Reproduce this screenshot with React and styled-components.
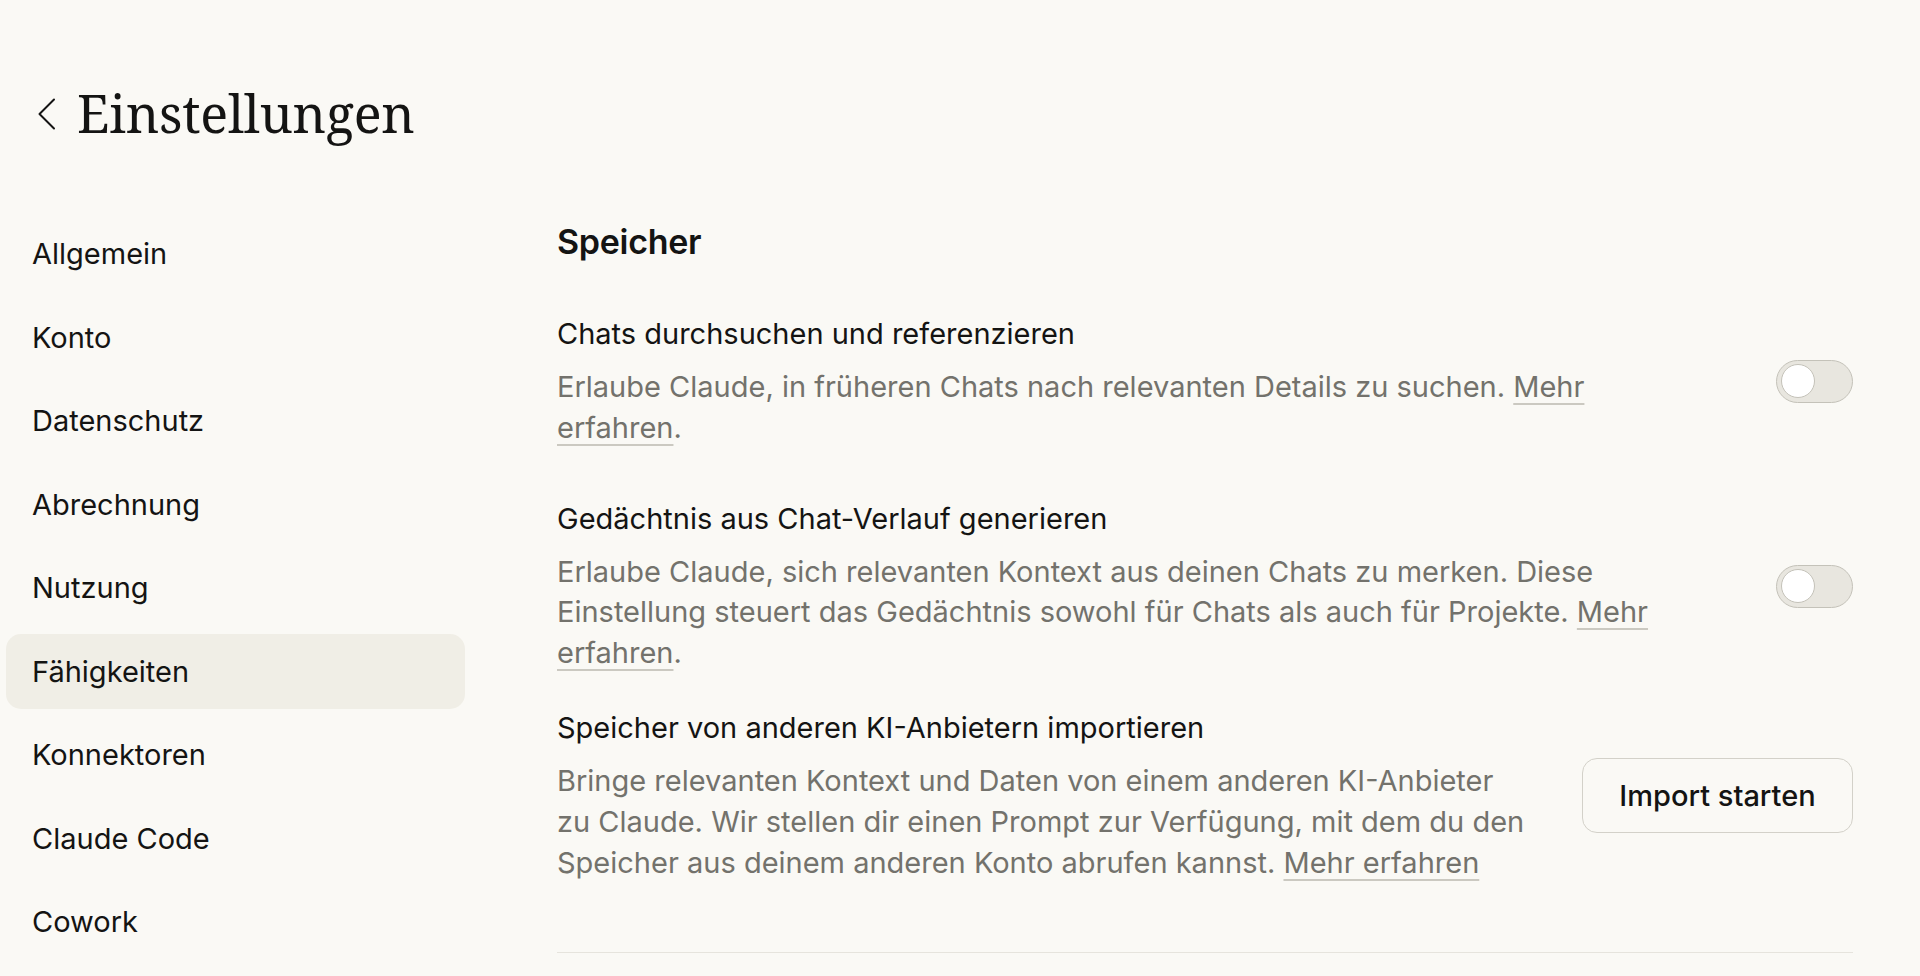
import React from 'react';
import styled, { createGlobalStyle } from 'styled-components';

const colors = {
  bg: '#faf9f5',
  text: '#141413',
  muted: '#73726c',
  active: '#f0eee6',
  border: '#c4c2b9',
  line: '#e6e4dd',
};

const GlobalStyle = createGlobalStyle`
  body {
    margin: 0;
    background: ${colors.bg};
    color: ${colors.text};
    font-family: Inter, "Noto Sans", sans-serif;
  }
`;

const navItems = [
  'Allgemein',
  'Konto',
  'Datenschutz',
  'Abrechnung',
  'Nutzung',
  'Fähigkeiten',
  'Konnektoren',
  'Claude Code',
  'Cowork',
];

function App() {
  return (
    <Page>
      <GlobalStyle />
      <Header>
        <BackButton aria-label="Zurück">
          <svg width="20" height="32" viewBox="0 0 20 32" fill="none">
            <path d="M17 1.5 L2.5 16 L17 30.5" stroke={colors.text} strokeWidth="2" strokeLinecap="round" strokeLinejoin="round" />
          </svg>
        </BackButton>
        <Title>Einstellungen</Title>
      </Header>

      <Layout>
        <Sidebar>
          {navItems.map((item) => (
            <NavItem key={item} active={item === 'Fähigkeiten'}>
              {item}
            </NavItem>
          ))}
        </Sidebar>

        <Main>
          <SectionTitle>Speicher</SectionTitle>

          <SettingRow space={50}>
            <SettingText>
              <SettingLabel>Chats durchsuchen und referenzieren</SettingLabel>
              <SettingDesc>
                Erlaube Claude, in früheren Chats nach relevanten Details zu suchen.{' '}
                <Link href="#">Mehr erfahren</Link>.
              </SettingDesc>
            </SettingText>
            <Toggle role="switch" aria-checked="false">
              <Knob />
            </Toggle>
          </SettingRow>

          <SettingRow space={50}>
            <SettingText>
              <SettingLabel>Gedächtnis aus Chat-Verlauf generieren</SettingLabel>
              <SettingDesc>
                Erlaube Claude, sich relevanten Kontext aus deinen Chats zu merken. Diese
                Einstellung steuert das Gedächtnis sowohl für Chats als auch für Projekte.{' '}
                <Link href="#">Mehr erfahren</Link>.
              </SettingDesc>
            </SettingText>
            <Toggle role="switch" aria-checked="false">
              <Knob />
            </Toggle>
          </SettingRow>

          <SettingRow space={34.5}>
            <SettingText>
              <SettingLabel>Speicher von anderen KI-Anbietern importieren</SettingLabel>
              <SettingDesc>
                Bringe relevanten Kontext und Daten von einem anderen KI-Anbieter zu Claude. Wir
                stellen dir einen Prompt zur Verfügung, mit dem du den Speicher aus deinem anderen
                Konto abrufen kannst. <Link href="#">Mehr erfahren</Link>
              </SettingDesc>
            </SettingText>
            <OutlineButton>Import starten</OutlineButton>
          </SettingRow>

          <Divider />
        </Main>
      </Layout>
    </Page>
  );
}

const Page = styled.div`
  min-height: 976px;
  overflow: hidden;
`;

const Header = styled.header`
  display: flex;
  align-items: center;
  gap: 20px;
  padding: 82px 0 0 37px;
`;

const BackButton = styled.button`
  display: flex;
  align-items: center;
  justify-content: center;
  padding: 0;
  margin-top: 2px;
  border: none;
  background: none;
  cursor: pointer;
`;

const Title = styled.h1`
  margin: 0;
  font-family: "Noto Serif", "DejaVu Serif", serif;
  font-size: 52px;
  font-weight: 400;
  line-height: 62px;
  letter-spacing: -0.2px;
  color: ${colors.text};
`;

const Layout = styled.div`
  display: flex;
  align-items: flex-start;
  gap: 92px;
  margin-top: 72px;
  padding-left: 6px;
`;

const Sidebar = styled.nav`
  display: flex;
  flex-direction: column;
  gap: 8.5px;
  width: 459px;
  flex: none;
`;

const NavItem = styled.a`
  display: block;
  height: 75px;
  padding-left: 26px;
  border-radius: 15px;
  font-size: 29px;
  line-height: 75px;
  color: ${colors.text};
  text-decoration: none;
  cursor: pointer;
  background: ${(props) => (props.active ? colors.active : 'transparent')};
`;

const Main = styled.main`
  display: flex;
  flex-direction: column;
  width: 1296px;
  padding-top: 3px;
`;

const SectionTitle = styled.h2`
  margin: 0;
  font-size: 34px;
  font-weight: 600;
  line-height: 45px;
  letter-spacing: -0.3px;
  color: ${colors.text};
`;

const SettingRow = styled.div`
  display: flex;
  align-items: center;
  justify-content: space-between;
  gap: 56px;
  margin-top: ${(props) => props.space}px;
`;

const SettingText = styled.div`
  display: flex;
  flex-direction: column;
  gap: 12.5px;
  flex: 1;
  max-width: 1120px;
`;

const SettingLabel = styled.div`
  font-size: 29px;
  line-height: 40.5px;
  color: ${colors.text};
`;

const SettingDesc = styled.p`
  margin: 0;
  font-size: 29px;
  line-height: 40.75px;
  color: ${colors.muted};
`;

const Link = styled.a`
  color: inherit;
  text-decoration: underline;
  text-decoration-thickness: 2px;
  text-decoration-color: #cbc9c1;
  text-underline-offset: 6px;
`;

const Toggle = styled.button`
  display: flex;
  align-items: center;
  flex: none;
  box-sizing: border-box;
  width: 77px;
  height: 43px;
  padding: 0 0 0 4px;
  border: 1px solid ${colors.border};
  border-radius: 22px;
  background: #e8e6df;
  cursor: pointer;
`;

const Knob = styled.span`
  display: block;
  box-sizing: border-box;
  width: 34px;
  height: 34px;
  border-radius: 50%;
  border: 1.5px solid ${colors.border};
  background: #ffffff;
`;

const OutlineButton = styled.button`
  flex: none;
  box-sizing: border-box;
  width: 271px;
  height: 75px;
  border: 1px solid #d3d1c9;
  border-radius: 15px;
  background: transparent;
  font-family: Inter, "Noto Sans", sans-serif;
  font-size: 29px;
  font-weight: 500;
  color: ${colors.text};
  cursor: pointer;
`;

const Divider = styled.hr`
  margin: 68px 0 0;
  border: none;
  border-top: 1.5px solid ${colors.line};
`;

export default App;
